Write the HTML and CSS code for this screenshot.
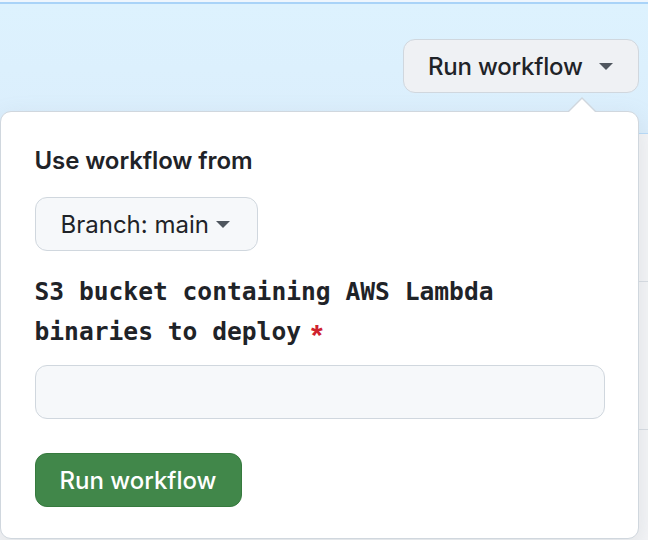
FILE: index.html
```html
<!DOCTYPE html>
<html>
<head>
<meta charset="utf-8">
<link rel="stylesheet" href="styles.css">
</head>
<body>
<div class="page">
  <div class="banner">
    <button class="btn btn-banner">Run workflow <span class="caret"></span></button>
  </div>
  <div class="rows">
    <div class="row"></div>
    <div class="row"></div>
    <div class="row row-last"></div>
  </div>
</div>
<div class="popover">
  <div class="title">Use workflow from</div>
  <button class="btn btn-branch">Branch: main <span class="caret"></span></button>
  <div class="field-label"><span class="label-text">S3 bucket containing AWS Lambda binaries to deploy</span><span class="req">*</span></div>
  <input class="field-input" type="text">
  <button class="btn btn-primary">Run workflow</button>
</div>
</body>
</html>
```
FILE: styles.css
```css
html, body {
  margin: 0;
  padding: 0;
}
body {
  width: 648px;
  height: 540px;
  overflow: hidden;
  background: #eef6fe;
  font-family: Inter, "Liberation Sans", sans-serif;
  color: #1f2328;
  position: relative;
}
.page {
  height: 540px;
  box-sizing: border-box;
  padding-top: 2px;
  display: flex;
  flex-direction: column;
}
.banner {
  background: linear-gradient(#ddf2fe, #dbeefc);
  border-top: 2px solid #a9d3f8;
  border-bottom: 1px solid #b8dbf9;
  padding: 35px 9px 40px 0;
  display: flex;
  justify-content: flex-end;
}
.rows {
  flex: 1;
  display: flex;
  flex-direction: column;
  background: #f4f5f7;
  overflow: hidden;
}
.row {
  height: 147px;
  flex: none;
  border-bottom: 1px solid #d8dde3;
}
.row-last {
  flex: 1;
  height: auto;
  border-bottom: none;
}
.btn {
  font-family: Inter, "Liberation Sans", sans-serif;
  font-size: 24px;
  font-weight: 500;
  box-sizing: border-box;
  height: 54px;
  border-radius: 12px;
  border: 1.5px solid #d0d7de;
  display: flex;
  align-items: center;
  padding: 0;
  cursor: pointer;
}
.btn-banner {
  width: 236px;
  background: #eff1f4;
  color: #1f2328;
  padding-left: 24px;
  letter-spacing: -0.2px;
}
.caret {
  display: inline-block;
  width: 0;
  height: 0;
  border-left: 7.5px solid transparent;
  border-right: 7.5px solid transparent;
  border-top: 7.5px solid #4f565e;
}
.btn-banner .caret {
  margin-left: 16px;
}
.popover {
  position: absolute;
  top: 111px;
  left: 0;
  width: 639px;
  height: 428px;
  box-sizing: border-box;
  background: #fff;
  border: 1.5px solid #d0d7de;
  border-radius: 11px;
  padding: 34px 33px 0 33.5px;
  display: flex;
  flex-direction: column;
  align-items: flex-start;
  box-shadow: 0 8px 24px rgba(140, 149, 159, 0.2);
}
.popover::before,
.popover::after {
  content: "";
  position: absolute;
  width: 0;
  height: 0;
  border-left: 14px solid transparent;
  border-right: 14px solid transparent;
}
.popover::before {
  top: -15.5px;
  left: 566.5px;
  border-bottom: 14px solid #d0d7de;
}
.popover::after {
  top: -13.5px;
  left: 566.5px;
  border-bottom: 14px solid #fff;
}
.title {
  font-size: 24px;
  font-weight: 600;
  line-height: 30px;
  letter-spacing: -0.1px;
}
.btn-branch {
  margin-top: 21px;
  width: 223px;
  background: #f6f8fa;
  color: #1f2328;
  font-weight: 400;
  padding-left: 25px;
}
.btn-branch .caret {
  margin-left: 7px;
  border-left-width: 7.5px;
  border-right-width: 7.5px;
  border-top-width: 7px;
}
.field-label {
  margin-top: 21px;
  font-family: "DejaVu Sans Mono", "Liberation Mono", monospace;
  font-weight: 700;
  font-size: 24.6px;
  line-height: 40px;
  color: #1f2328;
}
.req {
  font-family: "Liberation Sans", sans-serif;
  color: #cf222e;
  font-size: 30px;
  line-height: 20px;
  margin-left: 10px;
  vertical-align: -5px;
}
.field-input {
  margin-top: 13px;
  box-sizing: border-box;
  width: 570px;
  height: 54px;
  border: 1.5px solid #d0d7de;
  border-radius: 12px;
  background: #f6f8fa;
  outline: none;
  padding: 0 16px;
}
.btn-primary {
  margin-top: 34px;
  width: 207px;
  background: #41874a;
  border-color: #367a3e;
  color: #fff;
  justify-content: center;
}
```
